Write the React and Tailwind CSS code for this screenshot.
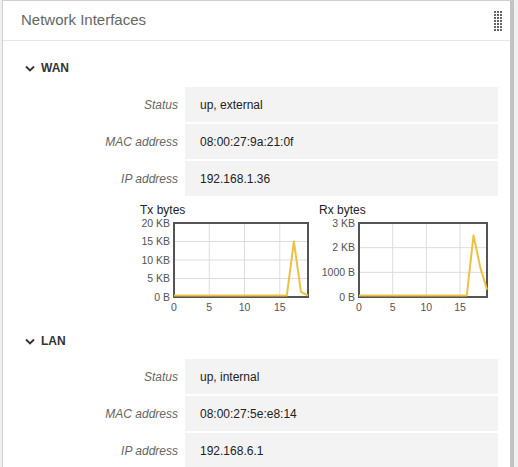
import React from 'react';

const wan = [
    { label: 'Status', value: 'up, external' },
    { label: 'MAC address', value: '08:00:27:9a:21:0f' },
    { label: 'IP address', value: '192.168.1.36' },
];

const lan = [
    { label: 'Status', value: 'up, internal' },
    { label: 'MAC address', value: '08:00:27:5e:e8:14' },
    { label: 'IP address', value: '192.168.6.1' },
];

function Chevron() {
    return (
        <svg width="10" height="7" viewBox="0 0 10 7" className="mr-[6px]">
            <path d="M1 1.5 L5 5.5 L9 1.5" fill="none" stroke="#333" strokeWidth="1.8" />
        </svg>
    );
}

function DragHandle() {
    const dots = [];
    for (let r = 0; r < 7; r++) {
        for (let c = 0; c < 3; c++) {
            dots.push(<rect key={`${r}-${c}`} x={c * 3} y={r * 3} width="2" height="2" fill="#666" />);
        }
    }
    return <svg width="8" height="20" viewBox="0 0 8 20">{dots}</svg>;
}

function InfoRow({ label, value }) {
    return (
        <div className="flex h-[35px]">
            <div className="w-[182px] pr-[7px] flex items-center justify-end italic text-[#666]">{label}</div>
            <div className="w-[313px] bg-[#f3f3f3] flex items-center pl-[15px] text-[#222]">{value}</div>
        </div>
    );
}

// small flot-style line chart
function Chart({ title, left, ticks, max, data }) {
    const right = 173, top = 5, bottom = 79;
    const xs = (i) => left + (i * (right - left)) / 19;
    const ys = (v) => bottom - (v / max) * (bottom - top);
    // keep the zero line just above the frame so it stays visible
    const pts = data.map((v, i) => `${xs(i)},${Math.min(ys(v), bottom - 1.5)}`).join(' ');
    return (
        <div className="w-[175px]">
            <div className="pl-[5px] text-[12px] leading-[14px] text-[#222]">{title}</div>
            <svg width="175" height="98" className="block mt-[1px]">
                {ticks.slice(1, -1).map((t) => (
                    <line key={t.v} x1={left} x2={right} y1={ys(t.v)} y2={ys(t.v)} stroke="#ddd" />
                ))}
                {[5, 10, 15].map((i) => (
                    <line key={i} x1={xs(i)} x2={xs(i)} y1={top} y2={bottom} stroke="#ddd" />
                ))}
                <rect x={left} y={top} width={right - left} height={bottom - top} fill="none" stroke="#545454" strokeWidth="2" />
                <polyline points={pts} fill="none" stroke="#edc240" strokeWidth="2" strokeLinejoin="round" />
                {ticks.map((t) => (
                    <text key={t.v} x={left - 4} y={ys(t.v) + 3.5} textAnchor="end" fontSize="10.5" fill="#545454">{t.label}</text>
                ))}
                {[0, 5, 10, 15].map((i) => (
                    <text key={i} x={xs(i)} y={93} textAnchor="middle" fontSize="10.5" fill="#545454">{i}</text>
                ))}
            </svg>
        </div>
    );
}

const zeros = Array(17).fill(0);

export default function App() {
    return (
        <div className="w-[518px] h-[467px] overflow-hidden bg-[#f0f0f0]" style={{ fontFamily: '"Liberation Sans", Arial, sans-serif' }}>
            <div className="ml-[2px] w-[512px] h-[480px] bg-white border-l border-t border-[#d0d0d0] border-r-[4px] border-r-[#c3c3c3] text-[12px]">
                {/* Header */}
                <div className="h-[40px] flex items-center justify-between pl-[18px] pr-[8px] border-b border-[#e6e6e6]">
                    <span className="text-[15px] text-[#666]">Network Interfaces</span>
                    <DragHandle />
                </div>

                {/* WAN */}
                <div className="pt-[20px]">
                    <div className="flex items-center pl-[22px] h-[14px] font-bold text-[#333]">
                        <Chevron />
                        WAN
                    </div>
                    <div className="mt-[12px] flex flex-col gap-[2px]">
                        {wan.map((r) => <InfoRow key={r.label} {...r} />)}
                    </div>
                    <div className="flex gap-[4px] pl-[132px] mt-[7px]">
                        <Chart
                            title="Tx bytes"
                            left={39}
                            max={20}
                            ticks={[
                                { v: 0, label: '0 B' },
                                { v: 5, label: '5 KB' },
                                { v: 10, label: '10 KB' },
                                { v: 15, label: '15 KB' },
                                { v: 20, label: '20 KB' },
                            ]}
                            data={[...zeros, 15, 1.4, 0.4]}
                        />
                        <Chart
                            title="Rx bytes"
                            left={45}
                            max={3}
                            ticks={[
                                { v: 0, label: '0 B' },
                                { v: 1, label: '1000 B' },
                                { v: 2, label: '2 KB' },
                                { v: 3, label: '3 KB' },
                            ]}
                            data={[...zeros, 2.5, 1.2, 0.3]}
                        />
                    </div>
                </div>

                {/* LAN */}
                <div className="pt-[18px]">
                    <div className="flex items-center pl-[22px] h-[14px] font-bold text-[#333]">
                        <Chevron />
                        LAN
                    </div>
                    <div className="mt-[11px] flex flex-col gap-[2px]">
                        {lan.map((r) => <InfoRow key={r.label} {...r} />)}
                    </div>
                </div>
            </div>
        </div>
    );
}
